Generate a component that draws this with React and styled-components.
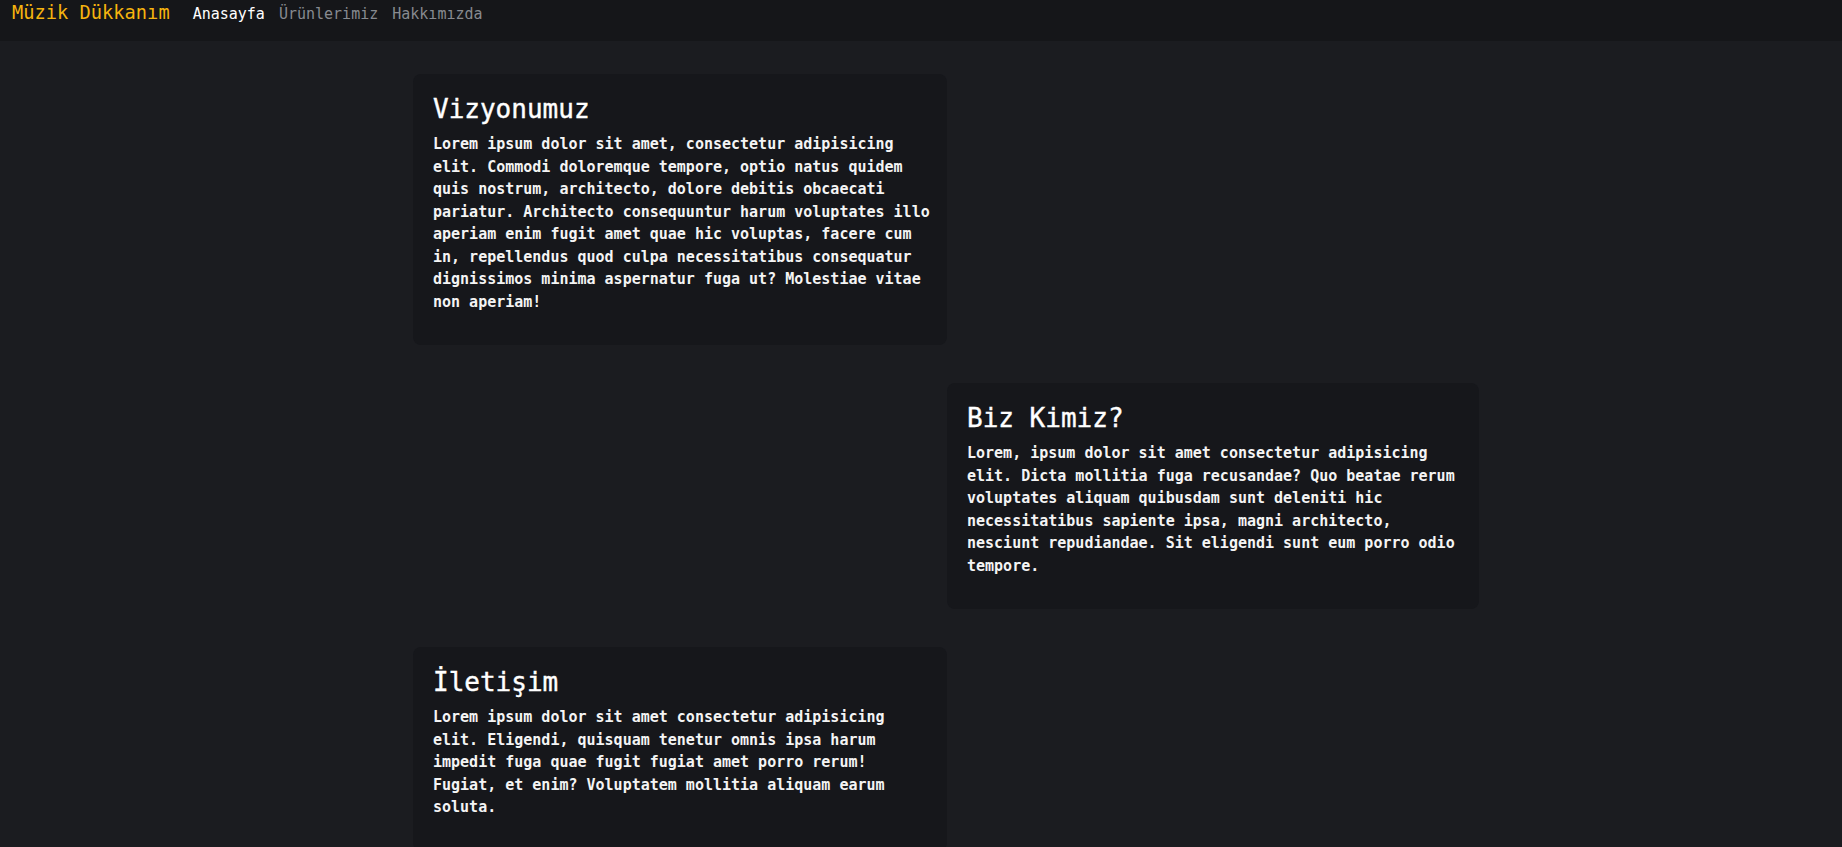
import React from 'react'
import styled, { createGlobalStyle } from 'styled-components'

const GlobalStyle = createGlobalStyle`
	html {
		scrollbar-width: none;
	}
	body {
		margin: 0;
		background-color: #1b1c20;
		color: #f2f2f2;
		font-family: "DejaVu Sans Mono", "Liberation Mono", monospace;
	}
`

const Nav = styled.nav`
	display: flex;
	align-items: baseline;
	box-sizing: border-box;
	height: 41px;
	padding: 4px 12px 0 12px;
	background-color: #151619;
`

const Brand = styled.h3`
	margin: 0 23px 0 0;
	font-size: 18.72px;
	font-weight: normal;
	line-height: 1;
	color: #f6b40e;
`

const NavLinks = styled.ul`
	display: flex;
	align-items: baseline;
	gap: 14px;
	margin: 0;
	padding: 0;
	list-style: none;
`

const NavLink = styled.a`
	font-size: 15px;
	line-height: 1;
	text-decoration: none;
	color: ${(props) => (props.$active ? '#ffffff' : '#878a90')};
	cursor: pointer;
`

const Main = styled.main`
	display: grid;
	grid-template-columns: 534px 532px;
	row-gap: 38px;
	padding: 33px 0 0 413px;
`

const Card = styled.section`
	grid-column: ${(props) => (props.$right ? 2 : 1)};
	grid-row: ${(props) => props.$row};
	box-sizing: border-box;
	padding: 22px 16px 20px 20px;
	background-color: #16171b;
	border-radius: 8px;
`

const CardTitle = styled.h2`
	margin: 0 0 11px 0;
	font-size: 26px;
	font-weight: normal;
	line-height: 1;
	color: #ffffff;
	-webkit-text-stroke: 0.4px #ffffff;
`

const CardText = styled.p`
	margin: 0 0 12px 0;
	font-size: 15px;
	font-weight: bold;
	line-height: 1.5;
	color: #f4f4f4;
`

const sections = [
	{
		title: 'Vizyonumuz',
		text: 'Lorem ipsum dolor sit amet, consectetur adipisicing elit. Commodi doloremque tempore, optio natus quidem quis nostrum, architecto, dolore debitis obcaecati pariatur. Architecto consequuntur harum voluptates illo aperiam enim fugit amet quae hic voluptas, facere cum in, repellendus quod culpa necessitatibus consequatur dignissimos minima aspernatur fuga ut? Molestiae vitae non aperiam!'
	},
	{
		title: 'Biz Kimiz?',
		text: 'Lorem, ipsum dolor sit amet consectetur adipisicing elit. Dicta mollitia fuga recusandae? Quo beatae rerum voluptates aliquam quibusdam sunt deleniti hic necessitatibus sapiente ipsa, magni architecto, nesciunt repudiandae. Sit eligendi sunt eum porro odio tempore.',
		right: true
	},
	{
		title: 'İletişim',
		text: 'Lorem ipsum dolor sit amet consectetur adipisicing elit. Eligendi, quisquam tenetur omnis ipsa harum impedit fuga quae fugit fugiat amet porro rerum! Fugiat, et enim? Voluptatem mollitia aliquam earum soluta.'
	}
]

const App = () => (
	<>
		<GlobalStyle />
		<Nav>
			<Brand>Müzik Dükkanım</Brand>
			<NavLinks>
				<li><NavLink $active>Anasayfa</NavLink></li>
				<li><NavLink>Ürünlerimiz</NavLink></li>
				<li><NavLink>Hakkımızda</NavLink></li>
			</NavLinks>
		</Nav>
		<Main>
			{sections.map((section, index) => (
				<Card key={section.title} $right={section.right} $row={index + 1}>
					<CardTitle>{section.title}</CardTitle>
					<CardText>{section.text}</CardText>
				</Card>
			))}
		</Main>
	</>
)

export default App
